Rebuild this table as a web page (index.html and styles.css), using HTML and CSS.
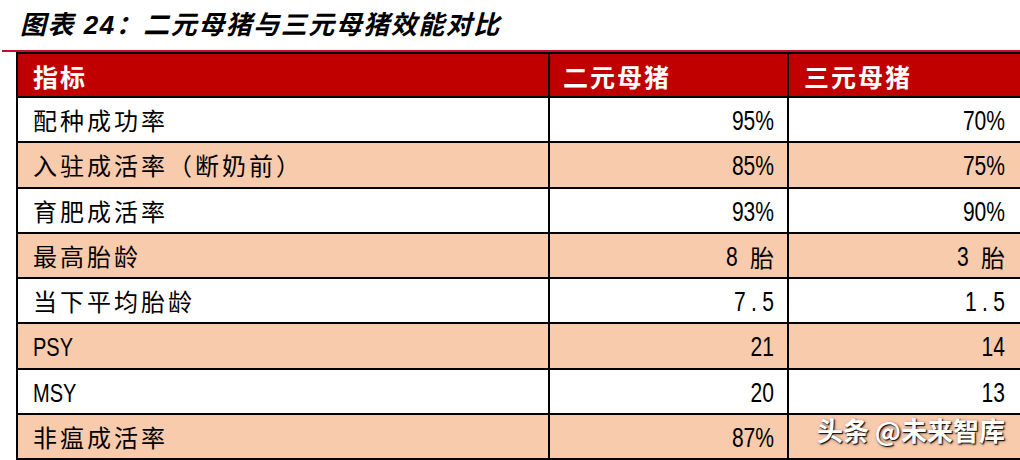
FILE: index.html
```html
<!DOCTYPE html>
<html lang="zh">
<head>
<meta charset="utf-8">
<title>二元母猪与三元母猪效能对比</title>
<link rel="stylesheet" href="styles.css">
</head>
<body>
<div class="title">图表 24：二元母猪与三元母猪效能对比</div>
<div class="rule"></div>
<div class="table">
  <div class="row head">
    <div class="cell c1">指标</div>
    <div class="cell c2">二元母猪</div>
    <div class="cell c3">三元母猪</div>
  </div>
  <div class="row">
    <div class="cell c1">配种成功率</div>
    <div class="cell c2"><span class="n">95%</span></div>
    <div class="cell c3"><span class="n">70%</span></div>
  </div>
  <div class="row alt">
    <div class="cell c1">入驻成活率（断奶前）</div>
    <div class="cell c2"><span class="n">85%</span></div>
    <div class="cell c3"><span class="n">75%</span></div>
  </div>
  <div class="row">
    <div class="cell c1">育肥成活率</div>
    <div class="cell c2"><span class="n">93%</span></div>
    <div class="cell c3"><span class="n">90%</span></div>
  </div>
  <div class="row alt">
    <div class="cell c1">最高胎龄</div>
    <div class="cell c2"><span class="n nl">8</span><span class="unit">胎</span></div>
    <div class="cell c3"><span class="n nl">3</span><span class="unit">胎</span></div>
  </div>
  <div class="row">
    <div class="cell c1">当下平均胎龄</div>
    <div class="cell c2"><span class="n sp">7.5</span></div>
    <div class="cell c3"><span class="n sp">1.5</span></div>
  </div>
  <div class="row alt">
    <div class="cell c1"><span class="lat">PSY</span></div>
    <div class="cell c2"><span class="n">21</span></div>
    <div class="cell c3"><span class="n">14</span></div>
  </div>
  <div class="row">
    <div class="cell c1"><span class="lat">MSY</span></div>
    <div class="cell c2"><span class="n">20</span></div>
    <div class="cell c3"><span class="n">13</span></div>
  </div>
  <div class="row alt">
    <div class="cell c1">非瘟成活率</div>
    <div class="cell c2"><span class="n">87%</span></div>
    <div class="cell c3"></div>
  </div>
</div>
<div class="watermark">头条 @未来智库</div>
</body>
</html>
```
FILE: styles.css
```css
html, body {
  margin: 0;
  padding: 0;
  background: #fff;
  overflow: hidden;
}
body {
  width: 1020px;
  height: 460px;
  position: relative;
  font-family: "Noto Sans CJK SC", sans-serif;
  color: #000;
}
.title {
  height: 50px;
  padding-left: 20px;
  font-family: "Liberation Sans", "Noto Sans CJK SC", sans-serif;
  font-style: italic;
  font-weight: bold;
  font-size: 26px;
  letter-spacing: 1.5px;
  line-height: 50px;
  white-space: nowrap;
}
.rule {
  height: 2px;
  margin-left: 2px;
  background: #c8102e;
}
.table {
  margin-left: 16px;
  border-left: 2px solid #000;
  border-top: 2px solid #000;
}
.row {
  display: flex;
  height: 45.25px;
  background: #fff;
}
.row.alt {
  background: #f8cbad;
}
.row.head {
  height: 44px;
  background: #c00000;
  color: #fff;
}
.cell {
  box-sizing: border-box;
  display: flex;
  align-items: center;
  border-right: 2px solid #000;
  border-bottom: 2px solid #000;
  white-space: nowrap;
  font-size: 24px;
  letter-spacing: 3px;
}
.c1 {
  width: 532px;
  padding-left: 15px;
}
.c2 {
  width: 239px;
  justify-content: flex-end;
  padding-right: 13px;
}
.c3 {
  flex: 1;
  border-right: none;
  justify-content: flex-end;
  padding-right: 15px;
}
.head .cell {
  font-weight: bold;
  font-size: 25px;
  letter-spacing: 2px;
  justify-content: flex-start;
  padding-top: 2px;
}
.head .c2 {
  padding-left: 13px;
}
.head .c3 {
  padding-left: 15px;
}
.n {
  display: inline-block;
  font-family: "Liberation Sans", sans-serif;
  font-size: 27px;
  letter-spacing: 0;
  line-height: 30px;
  padding-top: 3px;
  transform: scaleX(0.78);
  transform-origin: 100% 50%;
}
.n.nl {
  transform-origin: 0 50%;
  margin-right: -3px;
}
.n.sp {
  letter-spacing: 7px;
  margin-right: -5.5px;
}
.unit {
  font-family: "Noto Sans CJK SC", sans-serif;
  font-size: 24px;
  letter-spacing: 0;
  margin-left: 12px;
  padding-top: 2px;
}
.lat {
  display: inline-block;
  font-family: "Liberation Sans", sans-serif;
  font-size: 25px;
  letter-spacing: 0;
  line-height: 30px;
  padding-top: 3px;
  transform: scaleX(0.8);
  transform-origin: 0 50%;
}
.watermark {
  position: absolute;
  right: 15px;
  top: 413px;
  color: #fff;
  font-family: "Noto Sans CJK SC", sans-serif;
  font-weight: 700;
  font-size: 26px;
  line-height: 34px;
  white-space: nowrap;
  text-shadow: 1px 1px 1px rgba(0, 0, 0, 0.9), 1px 1px 3px rgba(0, 0, 0, 0.6);
}
```
